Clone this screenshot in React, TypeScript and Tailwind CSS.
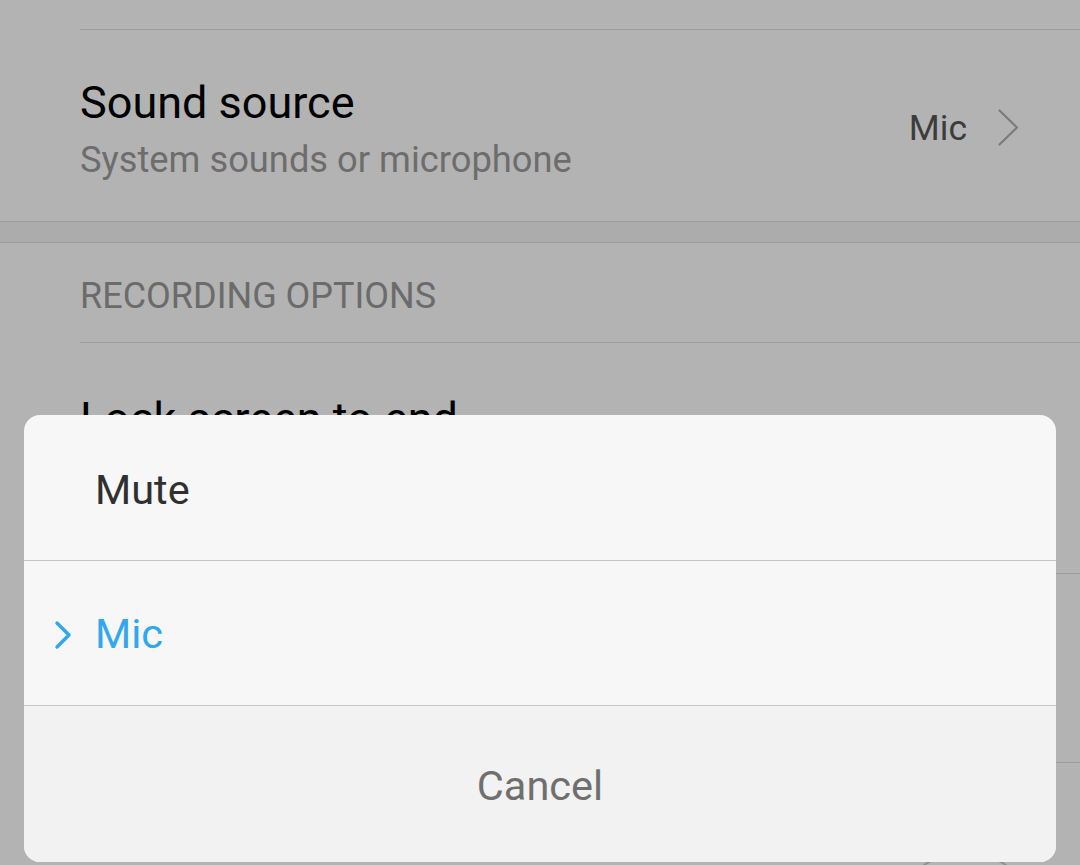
import React from "react";

const font = { fontFamily: "Roboto, 'Noto Sans', Arial, sans-serif" };

export default function App() {
  return (
    <div
      className="relative w-[1080px] h-[865px] overflow-hidden bg-[#b3b3b3]"
      style={font}
    >
      {/* Background settings list (dimmed) */}
      <div className="flex flex-col">
        <div className="h-[29px]" />
        <div className="ml-[80px] border-t border-[#9c9c9c]" />
        {/* Sound source row */}
        <div className="flex items-center h-[191px] pl-[80px] pr-[61px]">
          <div className="flex-1 flex flex-col pt-[7px]">
            <div className="text-[45px] leading-[52px] text-black">Sound source</div>
            <div className="text-[36.3px] leading-[44px] mt-[9px] text-[#6d6d6d]">
              System sounds or microphone
            </div>
          </div>
          <div className="flex items-center gap-[31px] mt-[4px]">
            <span className="text-[35.5px] leading-[44px] text-[#3c3c3c]">Mic</span>
            <svg width="21" height="37" viewBox="0 0 21 37" fill="none">
              <polyline
                points="1.5,1.5 19,18.5 1.5,35.5"
                stroke="#7b7b7b"
                strokeWidth="2.2"
                strokeLinecap="round"
                strokeLinejoin="round"
              />
            </svg>
          </div>
        </div>
        <div className="border-t border-[#9c9c9c]" />
        <div className="h-[20px] bg-[#acacac]" />
        <div className="border-t border-[#9c9c9c]" />
        {/* Section header */}
        <div className="h-[99px] flex items-center pl-[80px] pt-[6px]">
          <span className="text-[36px] leading-[44px] text-[#6b6b6b]">RECORDING OPTIONS</span>
        </div>
        <div className="ml-[80px] border-t border-[#9c9c9c]" />
        {/* Lock screen row */}
        <div className="h-[230px] pl-[80px] pt-[50px]">
          <div className="text-[45px] leading-[52px] text-black">Lock screen to end</div>
        </div>
        <div className="ml-[80px] border-t border-[#9c9c9c]" />
        <div className="h-[188px]" />
        <div className="ml-[80px] border-t border-[#9c9c9c]" />
        <div className="flex justify-end pr-[62px] pt-[95px]">
          <div className="w-[106px] h-[60px] rounded-full border-2 border-[#8f8f8f] flex items-center pl-[9px]">
            <div className="w-[38px] h-[38px] rounded-full border-2 border-[#8f8f8f]" />
          </div>
        </div>
      </div>

      {/* Dialog */}
      <div className="absolute left-[24px] top-[415px] w-[1032px] h-[447px] rounded-[16px] overflow-hidden flex flex-col bg-[#f7f7f7]">
        <div className="h-[145px] flex items-center pl-[71px]">
          <span className="text-[41.5px] leading-[48px] text-[#303030] mt-[4px]">Mute</span>
        </div>
        <div className="border-t border-[#c6c6c6]" />
        <div className="h-[144px] flex items-center relative pl-[71px]">
          <svg
            className="absolute left-[29px] top-[59px]"
            width="22"
            height="30"
            viewBox="0 0 22 30"
            fill="none"
          >
            <polyline
              points="4,3 16,15 4,27"
              stroke="#31a7ef"
              strokeWidth="3.4"
              strokeLinecap="round"
              strokeLinejoin="round"
            />
          </svg>
          <span className="text-[41.5px] leading-[48px] text-[#31a7ef] mt-[2px]">Mic</span>
        </div>
        <div className="border-t border-[#c6c6c6]" />
        <div className="flex-1 flex items-center justify-center bg-[#f2f2f2]">
          <span className="text-[41.5px] leading-[48px] text-[#6f6f6f] mt-[3px]">Cancel</span>
        </div>
      </div>
    </div>
  );
}
